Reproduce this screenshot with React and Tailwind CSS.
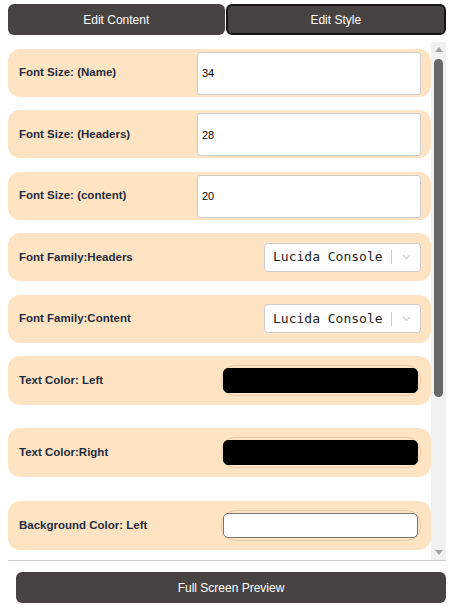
import React from 'react';

const sizeRows = [
  { label: 'Font Size: (Name)', value: '34' },
  { label: 'Font Size: (Headers)', value: '28' },
  { label: 'Font Size: (content)', value: '20' },
];

const familyRows = ['Font Family:Headers', 'Font Family:Content'];

const colorRows = [
  { label: 'Text Color: Left', swatch: 'bg-black border-black' },
  { label: 'Text Color:Right', swatch: 'bg-black border-black' },
  { label: 'Background Color: Left', swatch: 'bg-white border-[#767676]' },
];

const Label = ({ children }) => (
  <span className="text-[11.5px] font-bold text-[#1f2c3d]">{children}</span>
);

const App = () => {
  return (
    <div className="w-[454px] h-[612px] bg-white flex flex-col font-['Liberation_Sans',Arial,sans-serif]">
      {/* Tabs */}
      <div className="flex gap-[1px] px-2 pt-1">
        <button className="flex-1 h-[31px] rounded-md bg-[#474342] text-white text-xs">
          Edit Content
        </button>
        <button className="flex-1 h-[31px] rounded-md bg-[#474342] border-2 border-[#141414] text-white text-xs">
          Edit Style
        </button>
      </div>

      {/* Settings list */}
      <div className="mt-[7px] mx-2 flex h-[518px]">
        <div className="flex-1 overflow-hidden pt-[7px]">
          {sizeRows.map((row) => (
            <div
              key={row.label}
              className="h-12 mb-[13.4px] rounded-xl bg-[#ffe4c4] flex items-center justify-between pl-[11px] pr-[10px]"
            >
              <Label>{row.label}</Label>
              <div className="w-[224px] h-[43px] mt-[1px] border border-[#cccccc] rounded-[3px] bg-white flex items-center pl-[4px] text-[11px] text-black">
                {row.value}
              </div>
            </div>
          ))}

          {familyRows.map((label) => (
            <div
              key={label}
              className="h-12 mb-[13.4px] rounded-xl bg-[#ffe4c4] flex items-center justify-between pl-[11px] pr-[10px]"
            >
              <Label>{label}</Label>
              <div className="w-[157px] h-[29px] border border-[#cccccc] rounded-[4px] bg-white flex items-center">
                <span className="flex-1 pl-[8px] text-[13px] text-[#222] font-['DejaVu_Sans_Mono','Liberation_Mono',monospace]">
                  Lucida Console
                </span>
                <span className="w-[1px] h-[14px] bg-[#cccccc]" />
                <span className="w-[28px] flex justify-center">
                  <svg width="9" height="6" viewBox="0 0 9 6" fill="none">
                    <path d="M1 1l3.5 3.5L8 1" stroke="#cccccc" strokeWidth="1.2" />
                  </svg>
                </span>
              </div>
            </div>
          ))}

          {colorRows.map((row) => (
            <div
              key={row.label}
              className="h-[49px] mb-[23.5px] rounded-xl bg-[#ffe4c4] flex items-center justify-between pl-[11px] pr-[10px]"
            >
              <Label>{row.label}</Label>
              <div className="w-[200px] h-[31px] rounded-[14px] border border-[#e6cba9] flex pl-[1px] pr-[2px] pt-[2px] pb-[2px]">
                <div className={`flex-1 rounded-[5px] border ${row.swatch}`} />
              </div>
            </div>
          ))}
        </div>

        {/* Scrollbar */}
        <div className="w-[15px] bg-[#f1f1f1] flex flex-col items-center">
          <div className="h-[15px] flex items-center justify-center">
            <svg width="8" height="5" viewBox="0 0 8 5">
              <polygon points="0,5 8,5 4,0" fill="#a3a3a3" />
            </svg>
          </div>
          <div className="w-[9px] h-[338px] mt-[2px] rounded-[5px] bg-[#686868]" />
          <div className="flex-1" />
          <div className="h-[15px] flex items-center justify-center">
            <svg width="8" height="5" viewBox="0 0 8 5">
              <polygon points="0,0 8,0 4,5" fill="#a3a3a3" />
            </svg>
          </div>
        </div>
      </div>

      {/* Footer */}
      <div className="mx-2 border-t border-[#cccccc] shadow-[0_-5px_8px_rgba(0,0,0,0.04)]" />
      <div className="pt-[11px] pl-4 pr-2">
        <button className="w-full h-[31px] rounded-md bg-[#474342] text-white text-xs">
          Full Screen Preview
        </button>
      </div>
    </div>
  );
};

export default App;
